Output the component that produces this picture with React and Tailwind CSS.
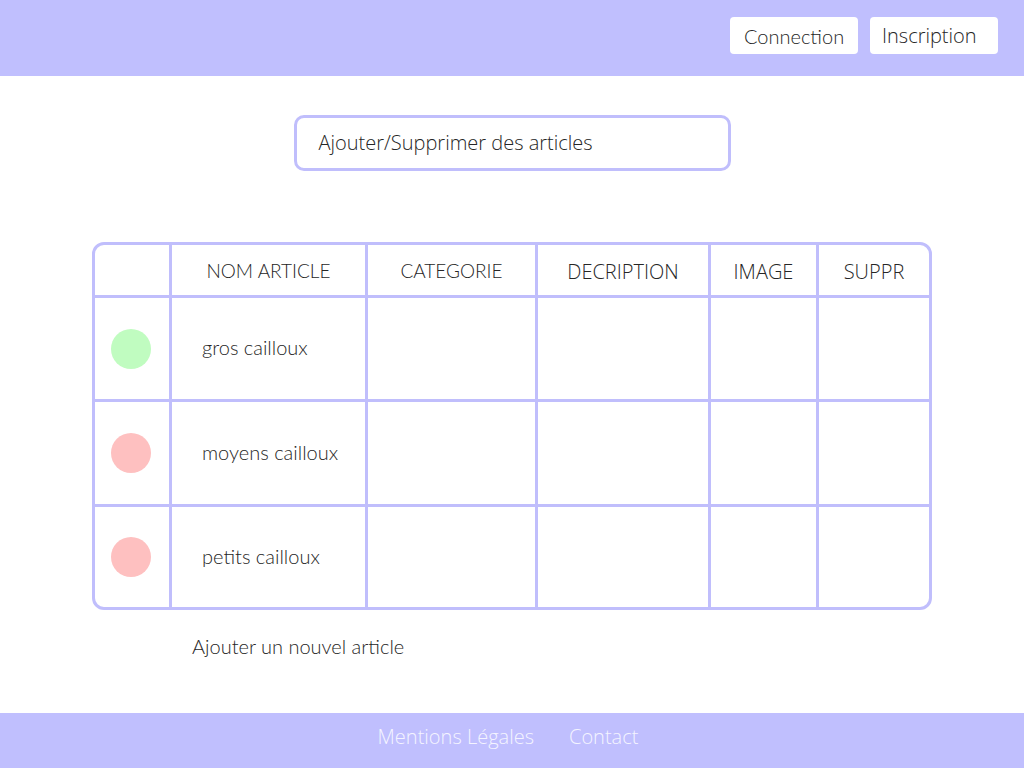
import React from "react";

const lato = "font-['Lato','Liberation_Sans',sans-serif]";
const open = "font-['Open_Sans','Liberation_Sans',sans-serif]";

const columns = [
  { label: "", font: lato, size: "text-[19px]" },
  { label: "NOM ARTICLE", font: lato, size: "text-[19px]" },
  { label: "CATEGORIE", font: lato, size: "text-[19px]" },
  { label: "DECRIPTION", font: open, size: "text-[20px]" },
  { label: "IMAGE", font: open, size: "text-[20px]" },
  { label: "SUPPR", font: open, size: "text-[20px]" },
];

const articles = [
  { name: "gros cailloux", color: "bg-[#c0fcc0]", h: "h-[104px]" },
  { name: "moyens cailloux", color: "bg-[#fec0c0]", h: "h-[105px]" },
  { name: "petits cailloux", color: "bg-[#fec0c0]", h: "h-[100px]" },
];

const App = () => {
  return (
    <div className="min-h-screen flex flex-col bg-white text-[#262626]">
      <header className="h-[76px] bg-[#c0bffe] flex items-center justify-end gap-3 pr-[26px] pb-[5px]">
        <button className={`w-[128px] h-[37px] bg-white rounded-[4px] text-left pl-[14px] text-[20px] font-light ${lato}`}>
          Connection
        </button>
        <button className={`w-[128px] h-[37px] bg-white rounded-[4px] text-left pl-[12px] text-[20px] font-light ${open}`}>
          Inscription
        </button>
      </header>

      <main className="flex-1 flex flex-col items-center">
        <div className={`mt-[39px] w-[437px] h-[56px] border-[3px] border-[#c0befc] rounded-[10px] flex items-center pl-[22px] text-[20px] font-light ${open}`}>
          Ajouter/Supprimer des articles
        </div>

        <div className="mt-[71px] w-[840px] border-[3px] border-[#c0befc] rounded-[12px] overflow-hidden">
          <div className="grid grid-cols-[77px_196px_170px_173px_108px_110px]">
            {columns.map((c, i) => (
              <div
                key={i}
                className={`h-[53px] pt-[3px] border-b-[3px] border-[#c0befc] flex items-center justify-center font-light ${c.size} ${c.font} ${i < 5 ? "border-r-[3px]" : ""}`}
              >
                {c.label}
              </div>
            ))}
            {articles.map((a, r) =>
              columns.map((c, i) => (
                <div
                  key={`${r}-${i}`}
                  className={`${a.h} border-[#c0befc] flex items-center ${i < 5 ? "border-r-[3px]" : ""} ${r < 2 ? "border-b-[3px]" : ""} ${i === 0 ? "justify-center pr-[3px]" : ""}`}
                >
                  {i === 0 && <span className={`w-[40px] h-[40px] rounded-full ${a.color}`} />}
                  {i === 1 && (
                    <span className={`pl-[30px] pb-[3px] text-[20px] font-light ${lato}`}>{a.name}</span>
                  )}
                </div>
              ))
            )}
          </div>
        </div>

        <div className="w-[840px] pl-[100px] mt-[22px] leading-[28px]">
          <span className={`text-[20px] font-light ${lato}`}>Ajouter un nouvel article</span>
        </div>
      </main>

      <footer className={`h-[55px] bg-[#c0bffe] flex items-center justify-center gap-[35px] pr-[8px] pb-[7px] text-[20px] font-light text-[#f4f4ff] ${open}`}>
        <span>Mentions Légales</span>
        <span>Contact</span>
      </footer>
    </div>
  );
};

export default App;
